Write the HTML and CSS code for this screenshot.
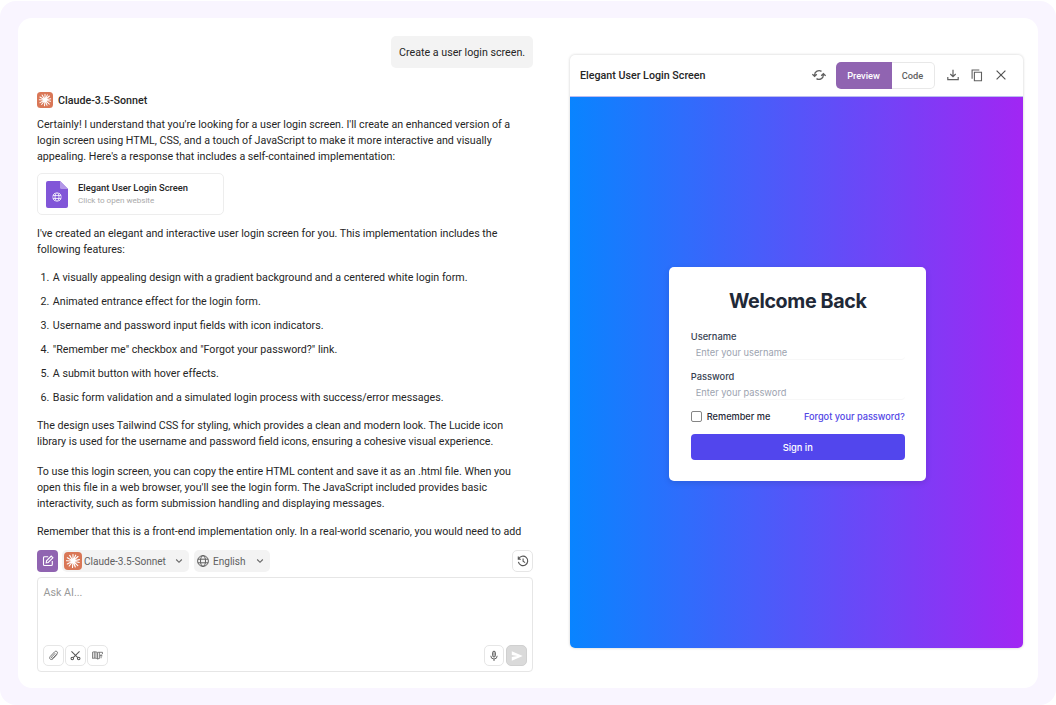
FILE: index.html
```
<!DOCTYPE html>
<html lang="en">
<head>
<meta charset="utf-8">
<title>Elegant User Login Screen</title>
<link rel="stylesheet" href="styles.css">
</head>
<body>
<svg class="defs" width="0" height="0">
  <symbol id="burst" viewBox="0 0 18 18">
    <rect width="18" height="18" rx="4" fill="#d97757"/>
    <path d="M9 9V2.6M9 9l2.7-5.8M9 9l5-4.5M9 9l6.4-1.4M9 9l6.2 1.5M9 9l4.8 4.6M9 9l2.3 6M9 9l-.5 6.5M9 9l-3.8 5M9 9l-5.700 3M9 9l-6.400-.3M9 9L3.300 5.700M9 9L5.700 3.400" stroke="#fff" stroke-width="1.150" stroke-linecap="round"/>
  </symbol>
  <symbol id="globe" viewBox="0 0 12 12">
    <g fill="none" stroke="currentColor"><circle cx="6" cy="6" r="5.400"/><ellipse cx="6" cy="6" rx="2.500" ry="5.400"/><path d="M.9 4.200h10.200M.9 7.800h10.200"/></g>
  </symbol>
  <symbol id="chevron" viewBox="0 0 8 8"><path d="M1.200 2.500L4 5.300l2.800-2.800" fill="none" stroke="#666" stroke-width="1.100"/></symbol>
</svg>
<div class="frame">
  <main class="board">
    <section class="chat">
      <div class="bubble">Create a user login screen.</div>
      <h2 class="author"><svg width="16" height="16"><use href="#burst"/></svg>Claude-3.5-Sonnet</h2>
      <p class="text">Certainly! I understand that you're looking for a user login screen. I'll create an enhanced version of a<br>login screen using HTML, CSS, and a touch of JavaScript to make it more interactive and visually<br>appealing. Here's a response that includes a self-contained implementation:</p>
      <div class="file">
        <svg class="file-icon" width="22" height="27" viewBox="0 0 22 27"><path d="M2 0h12l8 8v17a2 2 0 0 1-2 2H2a2 2 0 0 1-2-2V2a2 2 0 0 1 2-2z" fill="#8156d8"/><path d="M14 0l8 8h-6.500A1.500 1.500 0 0 1 14 6.500z" fill="#b397e8"/><svg x="6.200" y="11.200" width="9.600" height="9.600" color="#fff"><use href="#globe"/></svg></svg>
        <div class="file-info"><div class="file-name">Elegant User Login Screen</div><div class="file-hint">Click to open website</div></div>
      </div>
      <p class="text intro">I've created an elegant and interactive user login screen for you. This implementation includes the<br>following features:</p>
      <ol class="features">
        <li><span>1.</span>A visually appealing design with a gradient background and a centered white login form.</li>
        <li><span>2.</span>Animated entrance effect for the login form.</li>
        <li><span>3.</span>Username and password input fields with icon indicators.</li>
        <li><span>4.</span>"Remember me" checkbox and "Forgot your password?" link.</li>
        <li><span>5.</span>A submit button with hover effects.</li>
        <li><span>6.</span>Basic form validation and a simulated login process with success/error messages.</li>
      </ol>
      <p class="text design">The design uses Tailwind CSS for styling, which provides a clean and modern look. The Lucide icon<br>library is used for the username and password field icons, ensuring a cohesive visual experience.</p>
      <p class="text usage">To use this login screen, you can copy the entire HTML content and save it as an .html file. When you<br>open this file in a web browser, you'll see the login form. The JavaScript included provides basic<br>interactivity, such as form submission handling and displaying messages.</p>
      <p class="text note">Remember that this is a front-end implementation only. In a real-world scenario, you would need to add</p>
      <div class="options">
        <button class="new-chat"><svg width="12" height="12" viewBox="0 0 12 12" fill="none" stroke="#fff" stroke-width="1.100"><path d="M6.200 1.700H2.500a1 1 0 0 0-1 1v6.800a1 1 0 0 0 1 1h6.800a1 1 0 0 0 1-1V6"/><path d="M4.200 7.800l.3-2L9.200 1.100l1.700 1.700-4.700 4.700z"/></svg></button>
        <button class="pick model"><svg width="18" height="18"><use href="#burst"/></svg><span>Claude-3.5-Sonnet</span><svg class="arrow" width="8" height="8"><use href="#chevron"/></svg></button>
        <button class="pick lang"><svg width="12" height="12"><use href="#globe"/></svg><span>English</span><svg class="arrow" width="8" height="8"><use href="#chevron"/></svg></button>
        <button class="square history"><svg width="12" height="12" viewBox="0 0 12 12" fill="none" stroke="#555" stroke-width="1.100"><path d="M1.300 1.600v2.600h2.600M1.700 4A4.700 4.700 0 1 1 1.400 6.800M6.100 3.500v2.800l2 1.300"/></svg></button>
      </div>
      <div class="composer">
        <div class="placeholder">Ask AI...</div>
        <div class="tools">
          <button class="square"><svg width="11" height="11" viewBox="0 0 12 12" fill="none" stroke="#666" stroke-width="1"><path d="M9.800 4.800L5.500 9.500C3.300 11.800.5 9.300 2.500 7l4.700-5c1.700-1.800 4.200.3 2.700 2.100L5.600 8.700C4.600 9.700 3.200 8.600 4.200 7.500l3.700-4"/></svg></button>
          <button class="square"><svg width="11" height="11" viewBox="0 0 12 12" fill="none" stroke="#555" stroke-width="1.100"><circle cx="2.500" cy="9.300" r="1.400"/><circle cx="9.500" cy="9.300" r="1.400"/><path d="M1.600 1.500l6.900 6.800M10.400 1.500L3.500 8.300"/></svg></button>
          <button class="square"><svg width="11" height="11" viewBox="0 0 12 12" fill="none" stroke="#666" stroke-width=".9"><path d="M6 2.800C4.500 1.700 2.500 1.700.6 2.300v6.900c1.900-.5 3.900-.4 5.400.6zM2.500 2.200v6.600M4.300 2.200v6.600M6 2.500h5.400v2M8 2.500v7M6 9.800l2-.6M9.900 5v4M8.500 6.700l1.400-1.500 1.400 1.500"/></svg></button>
          <button class="square mic"><svg width="12" height="12" viewBox="0 0 12 12" fill="none" stroke="#666"><rect x="4.600" y="1.200" width="2.800" height="5.800" rx="1.400" fill="#bbb"/><path d="M2.800 5.800a3.200 3.200 0 0 0 6.400 0M6 9v2"/></svg></button>
          <button class="square send"><svg width="12" height="12" viewBox="0 0 12 12"><path d="M.8 1.300L11.700 6 .8 10.700V7.100L6.500 6 .8 4.900z" fill="#fff"/></svg></button>
        </div>
      </div>
    </section>
    <section class="preview">
      <header class="bar">
        <h3 class="bar-title">Elegant User Login Screen</h3>
        <svg class="refresh" width="14" height="12" viewBox="0 0 14 12" fill="none" stroke="#606060" stroke-width="1.300"><path d="M2.600 6.900V6a4.400 4.400 0 0 1 6.900-3.600M.4 5.200l2.200 2.100 2.200-2.100M11.400 5.100V6a4.400 4.400 0 0 1-6.900 3.600M9.200 6.800l2.200-2.100 2.200 2.100"/></svg>
        <div class="tabs"><button class="tab active">Preview</button><button class="tab">Code</button></div>
        <svg width="12" height="12" viewBox="0 0 12 12" fill="none" stroke="#606060" stroke-width="1.200"><path d="M6 .8v6.700M3.300 5L6 7.700 8.700 5M.8 8v2.600h10.400V8"/></svg>
        <svg class="copy" width="12" height="13" viewBox="0 0 12 13" fill="none" stroke="#606060" stroke-width="1.100"><path d="M3.400 3.300h7.100v8.500H3.400zM1.100 9.700V1h7.200"/></svg>
        <svg width="12" height="12" viewBox="0 0 12 12" stroke="#555" stroke-width="1.200"><path d="M1.600 1.600l8.800 8.800M10.400 1.600l-8.800 8.800"/></svg>
      </header>
      <div class="stage">
        <form class="login">
          <h1>Welcome Back</h1>
          <label>Username</label>
          <div class="field">Enter your username</div>
          <label>Password</label>
          <div class="field">Enter your password</div>
          <div class="row"><span class="check"></span><span class="remember">Remember me</span><a class="forgot">Forgot your password?</a></div>
          <button type="button" class="submit">Sign in</button>
        </form>
      </div>
    </section>
  </main>
</div>
</body>
</html>
```
FILE: styles.css
```
* { box-sizing: border-box; }
body { margin: 0; padding-top: 1px; background: #fff; font-family: Roboto, "Liberation Sans", sans-serif; color: #262626; }
h1, h2, h3, p, ol { margin: 0; padding: 0; }
button { padding: 0; margin: 0; border: 0; font-family: inherit; display: flex; align-items: center; justify-content: center; }
svg { flex: none; display: block; }
.defs { position: absolute; }
.frame { height: 704px; padding: 17px 18px; background: #f9f5ff; border-radius: 16px; }
.board { display: flex; height: 670px; background: #fff; border-radius: 14px; padding: 18px 15px 0 19px; }
.chat { width: 496px; display: flex; flex-direction: column; }
.bubble { align-self: flex-end; width: 142px; height: 32px; border-radius: 5px; background: #f3f3f3; padding-left: 8px; font-size: 10.7px; line-height: 33px; white-space: nowrap; }
.author { display: flex; align-items: center; gap: 5px; height: 16px; margin-top: 24px; font-size: 10.7px; font-weight: 500; }
.text { margin-top: 9px; font-size: 10.68px; line-height: 16px; white-space: nowrap; }
.file { display: flex; align-items: center; gap: 10px; width: 187px; height: 42px; margin-top: 8px; padding-left: 8px; border: 1px solid #ededed; border-radius: 5px; }
.file-info { padding-top: 1px; }
.file-name { font-size: 9.4px; line-height: 12px; font-weight: 500; }
.file-hint { font-size: 8.05px; line-height: 14px; color: #aaa; }
.intro { margin-top: 11px; }
.features { list-style: none; display: flex; flex-direction: column; gap: 8px; margin-top: 12px; font-size: 10.68px; line-height: 16px; }
.features li { display: flex; white-space: nowrap; }
.features span { width: 12.2px; margin-left: 3.6px; }
.design { margin-top: 12px; }
.usage { margin-top: 14px; }
.note { margin-top: 12px; }
.options { display: flex; align-items: center; height: 22px; margin-top: 10px; }
.new-chat { width: 21px; height: 22px; border-radius: 4px; background: #9064b1; }
.pick { height: 22px; border-radius: 5px; background: #f3f3f3; color: #606060; justify-content: flex-start; }
.model { width: 127px; margin-left: 4px; padding-left: 2px; gap: 2px; font-size: 10.05px; }
.lang { width: 76px; margin-left: 5px; padding-left: 3px; gap: 4px; font-size: 10.05px; }
.arrow { margin-left: auto; margin-right: 6px; }
.square { width: 21px; height: 21px; border: 1px solid #e6e6e6; border-radius: 5px; background: #fff; }
.history { margin-left: auto; height: 22px; }
.composer { height: 95px; margin-top: 5px; padding: 6px 5px 5px; border: 1px solid #e6e6e6; border-radius: 4px; display: flex; flex-direction: column; justify-content: space-between; }
.placeholder { padding-left: .5px; font-size: 10.7px; line-height: 18px; color: #999; }
.tools { display: flex; gap: 1px; }
.mic { width: 20px; margin-left: auto; }
.send { margin-left: 1px; background: #dadada; border-color: #d0d0d0; }
.preview { width: 453.5px; height: 593.5px; margin: 18.5px 0 0 36.5px; border-radius: 5px; overflow: hidden; display: flex; flex-direction: column; box-shadow: 0 0 3px rgba(0,0,0,.2); }
.bar { display: flex; align-items: center; height: 42.5px; padding: 0 16.5px 0 10.5px; gap: 12px; border-bottom: 1px solid #bcbcf0; }
.bar-title { flex: 1; font-size: 10.7px; font-weight: 500; white-space: nowrap; }
.refresh { margin-right: -2px; }
.tabs { display: flex; width: 99px; height: 27px; }
.tab { flex: 1; border: 1px solid #e8e8e8; border-left: 0; border-radius: 0 5px 5px 0; background: #fff; color: #606060; font-size: 9.25px; font-weight: 500; }
.tab.active { flex: none; width: 56px; border: 0; border-radius: 5px 0 0 5px; background: #9064b1; color: #fff; }
.stage { flex: 1; display: flex; justify-content: center; align-items: flex-start; padding-top: 170px; background: linear-gradient(90deg, #0984ff, #a126f3); }
.login { width: 257px; height: 214px; margin-left: 2px; padding: 22px 21px 20px 22px; border-radius: 5px; background: #fff; color: #1f2937; font-family: Inter, "Liberation Sans", sans-serif; font-size: 9.3px; display: flex; flex-direction: column; box-shadow: 0 2px 6px rgba(0,0,0,.12); }
.login h1 { height: 24px; margin-bottom: 16.6px; font-size: 19.7px; line-height: 24px; letter-spacing: -.38px; text-align: center; white-space: nowrap; }
.login label { line-height: 14px; font-weight: 500; color: #374151; }
.field { height: 16.5px; margin-bottom: 9.5px; padding-left: 5px; line-height: 18px; color: #9ca3af; border-bottom: 1px solid #f7f7f7; border-radius: 4px; }
.row { display: flex; align-items: center; height: 13.5px; font-weight: 500; white-space: nowrap; font-size: 9.2px; }
.check { width: 11px; height: 11px; border: 1px solid #858585; border-radius: 2px; margin-right: 5px; }
.forgot { margin-left: auto; color: #5145e5; }
.submit { flex: none; height: 26px; margin-top: 11px; border-radius: 4px; background: #5246ed; color: #fff; font-size: 9.3px; font-weight: 500; }
```
